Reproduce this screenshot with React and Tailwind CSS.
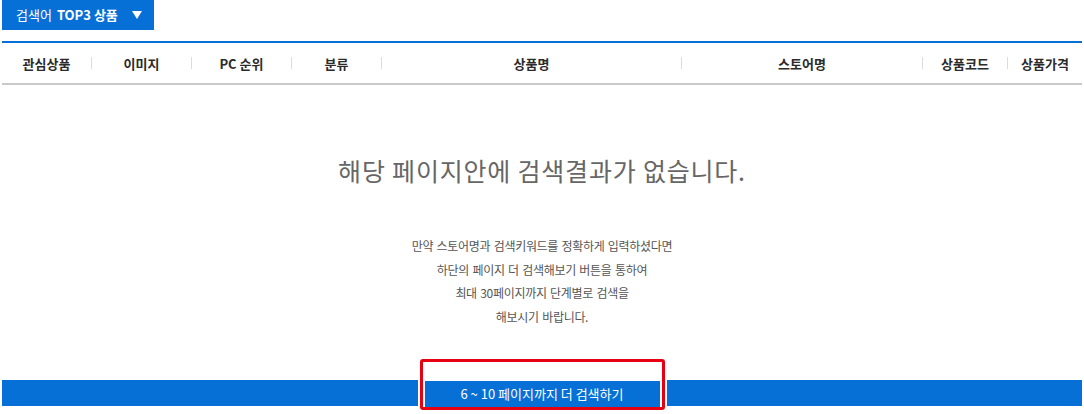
import React from 'react'

const columns = [
  { label: '관심상품', w: 'w-[90px]' },
  { label: '이미지', w: 'w-[100px]' },
  { label: 'PC 순위', w: 'w-[100px]' },
  { label: '분류', w: 'w-[90px]' },
  { label: '상품명', w: 'w-[300px]' },
  { label: '스토어명', w: 'w-[241px]' },
  { label: '상품코드', w: 'w-[85px]' },
  { label: '상품가격', w: 'flex-1', last: true },
]

const notice = [
  '만약 스토어명과 검색키워드를 정확하게 입력하셨다면',
  '하단의 페이지 더 검색해보기 버튼을 통하여',
  '최대 30페이지까지 단계별로 검색을',
  '해보시기 바랍니다.',
]

export default function App() {
  return (
    <div className="w-[1084px] h-[414px] bg-white px-[2px] overflow-hidden font-['Noto_Sans_CJK_KR','Noto_Sans',sans-serif]">
      <button className="flex items-center h-[30px] w-[152px] bg-[#0670d7] text-white text-[13px] pl-[14px]">
        <span>검색어</span>
        <span className="font-bold ml-[5px]">TOP3 상품</span>
        <svg className="ml-[14px]" width="10" height="8" viewBox="0 0 10 8">
          <path d="M0 0h10L5 8z" fill="#fff" />
        </svg>
      </button>

      <div className="mt-[11px] h-[2px] bg-[#0670d7]" />

      <div className="flex h-[42px] border-b-2 border-[#c9c9c9]">
        {columns.map(({ label, w, last }) => (
          <div key={label} className={`${w} flex items-center`}>
            <span className="flex-1 text-center text-[13px] font-bold text-[#2b2b2b] leading-none">
              {label}
            </span>
            {!last && <span className="w-px h-[12px] bg-[#dcdcdc]" />}
          </div>
        ))}
      </div>

      <p className="mt-[69px] text-center text-[25px] tracking-[0.8px] leading-[32px] text-[#666]">
        해당 페이지안에 검색결과가 없습니다.
      </p>

      <div className="mt-[48px] text-center text-[12px] tracking-[-0.3px] [word-spacing:1px] leading-[23.5px] text-[#555]">
        {notice.map((line) => (
          <p key={line}>{line}</p>
        ))}
      </div>

      <div className="mt-[31px] flex items-start">
        <div className="flex-1 mt-[21px] h-[26px] bg-[#0670d7]" />
        <div className="mx-[2px] w-[245px] h-[51px] border-[3px] border-[#e60012] rounded-[3px] bg-white pt-[18px] px-[2px]">
          <button className="w-full h-[26px] bg-[#0670d7] text-white text-[13px] leading-none">
            6 ~ 10 페이지까지 더 검색하기
          </button>
        </div>
        <div className="flex-1 mt-[21px] h-[26px] bg-[#0670d7]" />
      </div>
    </div>
  )
}
